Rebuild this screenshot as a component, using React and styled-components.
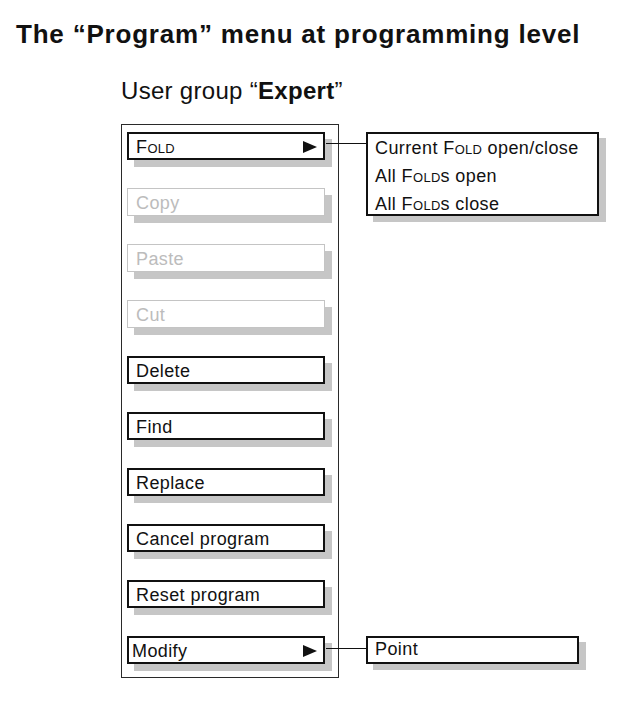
import React from 'react';
import styled, { createGlobalStyle } from 'styled-components';

const GlobalStyle = createGlobalStyle`
    body {
        margin: 0;
        background: #ffffff;
        color: #111111;
        font-family: "Liberation Sans", Arial, sans-serif;
    }
`;

const items = [
    { label: 'FOLD', arrow: true, flyout: 'fold' },
    { label: 'Copy', disabled: true },
    { label: 'Paste', disabled: true },
    { label: 'Cut', disabled: true },
    { label: 'Delete' },
    { label: 'Find' },
    { label: 'Replace' },
    { label: 'Cancel program' },
    { label: 'Reset program' },
    { label: 'Modify', arrow: true, tight: true, flyout: 'modify' },
];

// FOLD is always written with a big F and small capitals for the rest
function Fold() {
    return <>F<Sc>OLD</Sc></>;
}

function Arrow() {
    return (
        <ArrowIcon width="14" height="12" viewBox="0 0 14 12">
            <polygon points="0,0 14,6 0,12" fill="#111" />
        </ArrowIcon>
    );
}

function FoldFlyout() {
    return (
        <>
            <Connector $top={9} />
            <Flyout $width={233} $height={84}>
                <FlyoutLine>Current <Fold /> open/close</FlyoutLine>
                <FlyoutLine>All <Fold />s open</FlyoutLine>
                <FlyoutLine>All <Fold />s close</FlyoutLine>
            </Flyout>
        </>
    );
}

function ModifyFlyout() {
    return (
        <>
            <Connector $top={10} />
            <Flyout $width={213} $height={28}>
                <FlyoutLine $single>Point</FlyoutLine>
            </Flyout>
        </>
    );
}

export default function App() {
    return (
        <Page>
            <GlobalStyle />
            <Title>The “Program” menu at programming level</Title>
            <Subtitle>User group “<b>Expert</b>”</Subtitle>
            <MenuPanel>
                {items.map((item, i) => (
                    <MenuItem key={i} $disabled={item.disabled} $tight={item.tight}>
                        <Label>{item.label === 'FOLD' ? <Fold /> : item.label}</Label>
                        {item.arrow && <Arrow />}
                        {item.flyout === 'fold' && <FoldFlyout />}
                        {item.flyout === 'modify' && <ModifyFlyout />}
                    </MenuItem>
                ))}
            </MenuPanel>
        </Page>
    );
}

const Page = styled.div`
    display: flex;
    flex-direction: column;
    align-items: flex-start;
    padding: 19px 0 40px 16px;
    min-height: 721px;
    box-sizing: border-box;
`;

const Title = styled.h1`
    margin: 0;
    font-size: 26px;
    line-height: 30px;
    font-weight: bold;
    letter-spacing: 0.8px;
`;

const Subtitle = styled.h2`
    margin: 28px 0 0 105px;
    font-size: 24px;
    line-height: 28px;
    font-weight: normal;
    letter-spacing: 0.3px;
    b {
        font-weight: bold;
    }
`;

const MenuPanel = styled.div`
    margin: 19px 0 0 105px;
    width: 218px;
    box-sizing: border-box;
    border: 1px solid #2a2a2a;
    padding: 7px 0 13px 5px;
    display: flex;
    flex-direction: column;
    gap: 28px;
`;

const MenuItem = styled.div`
    position: relative;
    width: 198px;
    height: 28px;
    box-sizing: border-box;
    display: flex;
    align-items: flex-start;
    justify-content: space-between;
    background: #ffffff;
    border: ${p => (p.$disabled ? '1px solid #c4c4c4' : '2px solid #111111')};
    padding: ${p => (p.$disabled ? '3px 7px 0 8px' : p.$tight ? '2px 6px 0 3px' : '2px 6px 0 7px')};
    color: ${p => (p.$disabled ? '#bcbcbc' : '#111111')};
    box-shadow: 7px 7px 0 #c6c6c6;
`;

const Label = styled.span`
    font-size: 18px;
    line-height: 22px;
    letter-spacing: 0.4px;
    white-space: nowrap;
`;

const Sc = styled.span`
    font-size: 0.72em;
    line-height: 1;
    letter-spacing: 0.3px;
`;

const ArrowIcon = styled.svg`
    align-self: center;
    margin-top: -1px;
    flex: none;
`;

const Connector = styled.div`
    position: absolute;
    left: calc(100% + 3px);
    top: ${p => p.$top}px;
    width: 40px;
    height: 1px;
    background: #111111;
    z-index: 2;
`;

const Flyout = styled.div`
    position: absolute;
    left: 237px;
    top: -2px;
    width: ${p => p.$width}px;
    height: ${p => p.$height}px;
    box-sizing: border-box;
    border: 2px solid #111111;
    background: #ffffff;
    padding-left: 7px;
    box-shadow: 7px 6px 0 #c6c6c6;
    display: flex;
    flex-direction: column;
    z-index: 3;
`;

const FlyoutLine = styled.div`
    font-size: 18px;
    line-height: ${p => (p.$single ? '22px' : '28px')};
    letter-spacing: 0.4px;
    color: #111111;
    white-space: nowrap;
`;
